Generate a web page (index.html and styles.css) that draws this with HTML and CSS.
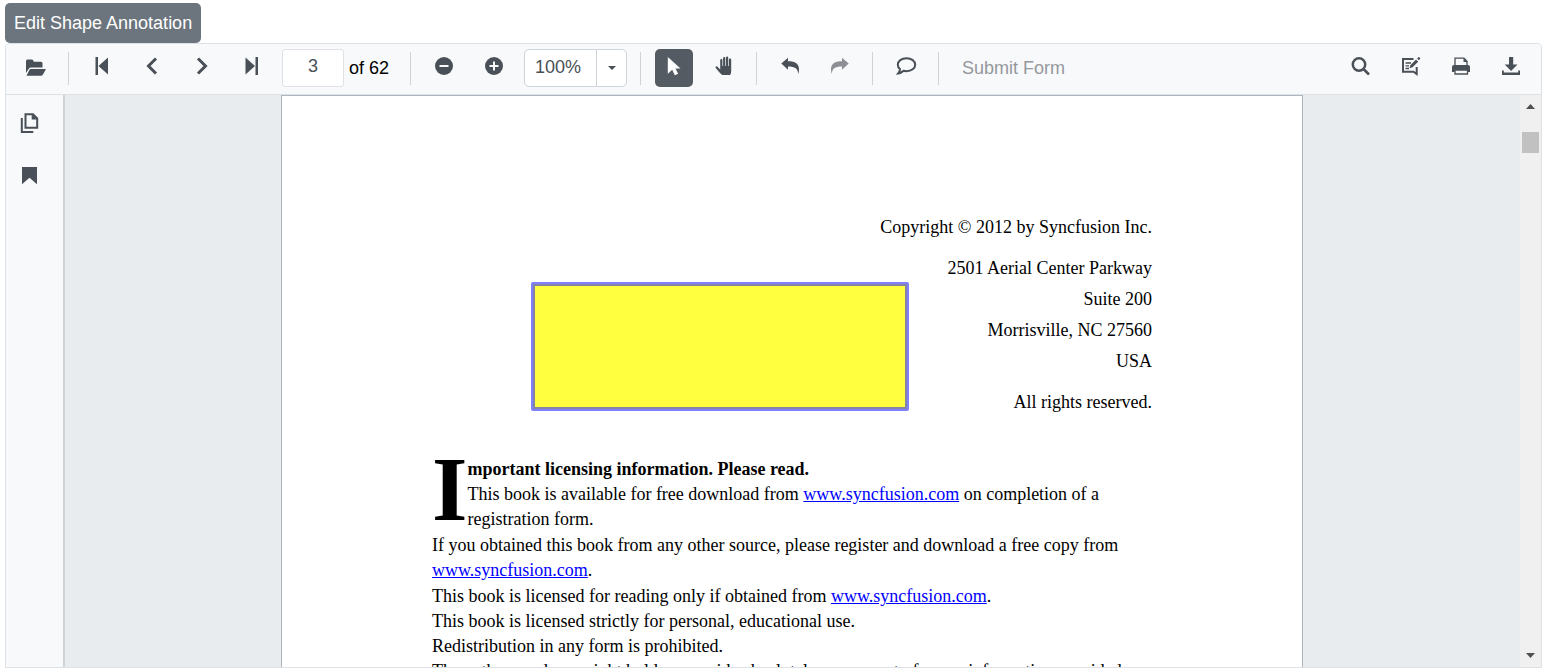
FILE: index.html
```
<!DOCTYPE html>
<html lang="en">
<head>
<meta charset="utf-8">
<title>PDF Viewer</title>
<link rel="stylesheet" href="styles.css">
</head>
<body>
<button class="edit-btn" type="button">Edit Shape Annotation</button>
<main class="viewer">
  <div class="toolbar" role="toolbar" aria-label="PDF toolbar">
    <div class="group">
      <button class="tool" type="button" aria-label="Open file"><svg viewBox="0 0 38 38"><path d="M9 24V12q0-1.500 1.500-1.500h4.300q1 0 1.300.8l.7 1.500h7.200q1.500 0 1.500 1.500v4.200H14q-1.500 0-2.200 1.200z"/><path d="M13.800 20H29l-3.200 5.800q-.6 1-1.800 1H9.500l3-6q.4-.8 1.300-.8z"/></svg></button>
    </div>
    <span class="sep"></span>
    <div class="group">
      <button class="tool" type="button" aria-label="First page"><svg viewBox="0 0 38 38"><path d="M12.500 8h2.500v18h-2.500zM25 8.500v17L15.500 17z"/></svg></button>
      <button class="tool" type="button" aria-label="Previous page"><svg viewBox="0 0 38 38"><path class="line thick" d="M23 9.500L15.500 17l7.500 7.500"/></svg></button>
      <button class="tool" type="button" aria-label="Next page"><svg viewBox="0 0 38 38"><path class="line thick" d="M15 9.500l7.500 7.500L15 24.500"/></svg></button>
      <button class="tool" type="button" aria-label="Last page"><svg viewBox="0 0 38 38"><path d="M22.500 8H25v18h-2.500zM12.500 8.500v17L22 17z"/></svg></button>
    </div>
    <div class="pager">
      <input class="page-input" id="page" type="text" value="3">
      <label for="page">of 62</label>
    </div>
    <span class="sep"></span>
    <div class="group">
      <button class="tool" type="button" aria-label="Zoom out"><svg viewBox="0 0 38 38"><circle cx="19" cy="17" r="9"/><path class="cut" d="M14.500 17h9"/></svg></button>
      <button class="tool" type="button" aria-label="Zoom in"><svg viewBox="0 0 38 38"><circle cx="19" cy="17" r="9"/><path class="cut" d="M14.500 17h9M19 12.500v9"/></svg></button>
    </div>
    <div class="zoom">
      <input class="zoom-input" type="text" value="100%" aria-label="Zoom level">
      <button class="zoom-open" type="button" aria-label="Zoom levels"><svg viewBox="0 0 8 4"><path d="M0 0h8L4 4z"/></svg></button>
    </div>
    <span class="sep"></span>
    <div class="group">
      <button class="tool active" type="button" aria-label="Text selection"><svg viewBox="0 0 38 38"><path d="M12.800 8l12.700 11.500h-5l2.600 5.300-3.300 1.500-2.600-5.500-4.400 4z"/></svg></button>
      <button class="tool" type="button" aria-label="Pan"><svg viewBox="0 0 38 38"><path d="M15.200 20.500V11q0-1.100 1.100-1.100t1.100 1.100v6h.7V9q0-1.100 1.100-1.100T20.300 9v8h.7V8.500q0-1.100 1.100-1.100t1.100 1.100V17h.7v-6.500q0-1.100 1.100-1.100t1.200 1.100V22q0 2-1 4h-8q-2.200-1.500-3.700-3.700l-2.900-3.600q-.5-1 .4-1.300 1-.4 2 .8z"/></svg></button>
    </div>
    <span class="sep"></span>
    <div class="group">
      <button class="tool" type="button" aria-label="Undo"><svg viewBox="0 0 38 38"><path d="M10.300 14.500L17 8.800v3.400c7.500 0 11 2.600 11 8.200 0 1.800-.3 3.300-.9 4.600.1-5.300-3.100-7.600-10.100-7.600v3.300z"/></svg></button>
      <button class="tool" type="button" aria-label="Redo" disabled><svg viewBox="0 0 38 38"><path d="M27.700 14.500L21 8.800v3.400c-7.500 0-11 2.600-11 8.200 0 1.800.3 3.300.9 4.600-.1-5.300 3.100-7.600 10.100-7.600v3.300z"/></svg></button>
    </div>
    <span class="sep"></span>
    <div class="group">
      <button class="tool" type="button" aria-label="Comment"><svg viewBox="0 0 38 38"><path class="line" d="M19.500 9.200c5 0 8.700 2.900 8.700 6.500s-3.700 6.500-8.700 6.500c-1 0-2-.1-2.900-.4-1.600 1.600-3.300 2.400-5.400 2.600 1.200-1.300 1.700-2.700 1.800-4.300-1.400-1.200-2.200-2.700-2.200-4.400 0-3.600 3.700-6.500 8.700-6.500z"/></svg></button>
    </div>
    <span class="sep"></span>
    <button class="submit" type="button" disabled>Submit Form</button>
    <div class="group end">
      <button class="tool" type="button" aria-label="Search"><svg viewBox="0 0 38 38"><circle class="line heavy" cx="17" cy="15.500" r="6.200"/><path class="line heavy" d="M21.500 20l5.500 5.500"/></svg></button>
      <button class="tool" type="button" aria-label="Edit annotations"><svg viewBox="0 0 38 38"><path class="line" d="M21.500 10H11v12.800h10.500l3.200 2.200V18"/><path class="line fine" d="M13.500 14h5.500M13.500 16.800h3.500M13.500 19.500h3.500"/><path d="M24 10.500l2.200 2.200-5.700 5.600-3 .9.900-3zM26.300 8.300q.5-.5 1 0l.7.700q.5.500 0 1l-1.200 1.200-1.700-1.700z"/></svg></button>
      <button class="tool" type="button" aria-label="Print"><svg viewBox="0 0 38 38"><path class="line fine" d="M13 17V9.200h9l3 3V17M13 21v4h12.500v-4"/><path d="M21.500 9l4 4h-4z"/><path d="M12 16h14q2 0 2 2v5h-2.500v-1.200H12.500V23H10v-5q0-2 2-2z"/></svg></button>
      <button class="tool" type="button" aria-label="Download"><svg viewBox="0 0 38 38"><path d="M17 8h4.200v7.500h4.300L19.100 22l-6.400-6.500H17zM10 21.500h1.800v2h14.400v-2H28V26H10z"/></svg></button>
    </div>
  </div>
  <div class="content">
    <nav class="sidebar" aria-label="Panels">
      <button class="tool" type="button" aria-label="Page thumbnails"><svg viewBox="0 0 38 38"><path class="line" d="M14.500 10.200h7.500l4.200 4.300v9.200H14.500zM10.800 14v14h11.500"/><path d="M20.700 10l5.500 5.500h-5.500z"/></svg></button>
      <button class="tool" type="button" aria-label="Bookmarks"><svg viewBox="0 0 38 38"><path d="M11 10h15v17.300l-7.500-6.500-7.500 6.500z"/></svg></button>
    </nav>
    <section class="canvas">
      <article class="page">
        <div class="annotation"></div>
        <address class="imprint">
          <p class="spaced">Copyright © 2012 by Syncfusion Inc.</p>
          <p>2501 Aerial Center Parkway</p>
          <p>Suite 200</p>
          <p>Morrisville, NC 27560</p>
          <p class="spaced">USA</p>
          <p>All rights reserved.</p>
        </address>
        <div class="license">
          <p><b><span class="dropcap">I</span>mportant licensing information. Please read.</b></p>
          <p class="two-line">This book is available for free download from <a href="#">www.syncfusion.com</a> on completion of a<br>registration form.</p>
          <p class="two-line">If you obtained this book from any other source, please register and download a free copy from<br><a href="#">www.syncfusion.com</a>.</p>
          <p>This book is licensed for reading only if obtained from <a href="#">www.syncfusion.com</a>.</p>
          <p>This book is licensed strictly for personal, educational use.</p>
          <p>Redistribution in any form is prohibited.</p>
          <p>The authors and copyright holders provide absolutely no warranty for any information provided.</p>
        </div>
      </article>
    </section>
    <div class="scrollbar">
      <svg class="arrow" viewBox="0 0 9 5"><path d="M0 5h9L4.500 0z"/></svg>
      <div class="track"><div class="thumb"></div></div>
      <svg class="arrow" viewBox="0 0 9 5"><path d="M0 0h9L4.500 5z"/></svg>
    </div>
  </div>
</main>
</body>
</html>
```
FILE: styles.css
```
* { box-sizing: border-box; }
html { height: 100%; }
body {
  display: flex;
  flex-direction: column;
  align-items: flex-start;
  height: 100%;
  margin: 0;
  padding: 3px 1px 2px 5px;
  overflow: hidden;
  background: #fff;
  font-family: "Liberation Sans", Arial, sans-serif;
  font-size: 18px;
}
button, input { font: inherit; }
p { margin: 0; }
.edit-btn {
  height: 40px;
  padding: 0 9px;
  border: 0;
  border-radius: 5px;
  background: #6c757d;
  color: #fff;
}
.viewer {
  display: flex;
  flex: 1;
  flex-direction: column;
  align-self: stretch;
  min-height: 0;
  border: 1px solid #dee2e6;
  border-radius: 4px 4px 0 0;
}
.toolbar {
  display: flex;
  align-items: center;
  height: 51px;
  flex: none;
  padding: 0 11px 2px;
  border-bottom: 1px solid #dee2e6;
  border-radius: 4px 4px 0 0;
  background: #f8f9fa;
}
.group { display: flex; gap: 12px; }
.end { margin-left: auto; }
.tool {
  width: 38px;
  height: 38px;
  padding: 0;
  border: 0;
  border-radius: 5px;
  background: transparent;
  color: #495057;
}
.tool svg { display: block; width: 38px; height: 38px; fill: currentColor; }
.tool:disabled { color: #8c9094; }
.active { background: #545b62; color: #fff; }
.tool .line { fill: none; stroke: currentColor; stroke-width: 2; }
.tool .heavy { stroke-width: 2.500; }
.tool .thick { stroke-width: 3; }
.tool .fine { stroke-width: 1.300; }
.tool .cut { fill: none; stroke: #f8f9fa; stroke-width: 2; }
.sep {
  width: 1px;
  height: 33px;
  margin: 0 14px 0 13px;
  background: #ced4da;
}
.pager {
  display: flex;
  align-items: center;
  gap: 5px;
  margin: 0 8px 0 11px;
  color: #000;
}
.page-input {
  width: 62px;
  height: 38px;
  padding: 0 0 4px;
  border: 1px solid #dee2e6;
  border-radius: 3px;
  background: #fff;
  color: #495057;
  text-align: center;
}
.zoom {
  display: flex;
  width: 103px;
  height: 38px;
  margin-left: 11px;
  border: 1px solid #ced4da;
  border-radius: 5px;
  background: #fff;
}
.zoom-input {
  flex: 1;
  min-width: 0;
  padding: 0 0 2px 10px;
  border: 0;
  background: transparent;
  color: #495057;
}
.zoom-open {
  display: grid;
  place-items: center;
  width: 30px;
  padding: 0;
  border: 0;
  border-left: 1px solid #ced4da;
  background: transparent;
  color: #495057;
}
.zoom-open svg { width: 8px; height: 4px; fill: currentColor; }
.submit {
  padding: 0 9px;
  border: 0;
  background: transparent;
  color: #95989c;
}
.content { display: flex; flex: 1; min-height: 0; }
.sidebar {
  display: flex;
  flex: none;
  flex-direction: column;
  gap: 15px;
  width: 59px;
  padding: 9px 5px;
  border-right: 2px solid #ced4da;
  background: #f8f9fa;
}
.canvas {
  flex: 1;
  min-width: 0;
  padding-right: 1px;
  overflow: hidden;
  background: #e9ecef;
}
.page {
  position: relative;
  width: 100%;
  max-width: 1022px;
  margin: 0 auto;
  padding: 116px 150px;
  border: 1px solid #adb5bd;
  background: #fff;
  color: #000;
  font-family: "Liberation Serif", "Times New Roman", serif;
}
.annotation {
  position: absolute;
  top: 186px;
  left: 249px;
  width: 378px;
  height: 129px;
  border: 2px solid #8080ff;
  border-radius: 2px;
  background: #ffff40;
  box-shadow: inset 0 0 0 2px #8484a4;
}
.imprint {
  font-style: normal;
  line-height: 31px;
  text-align: right;
}
.spaced { margin-bottom: 10px; }
.license {
  margin-top: 39px;
  line-height: 25px;
}
.two-line { margin-bottom: 1px; }
.dropcap {
  float: left;
  font-size: 91px;
  line-height: 66px;
}
.license a { color: #00f; }
.scrollbar {
  display: flex;
  flex: none;
  flex-direction: column;
  align-items: center;
  width: 21px;
  padding: 9px 0;
  background: #f0f0f0;
}
.arrow { width: 9px; height: 5px; fill: #505050; }
.track { flex: 1; padding-top: 23px; }
.thumb { width: 17px; height: 21px; background: #c1c1c1; }
```
